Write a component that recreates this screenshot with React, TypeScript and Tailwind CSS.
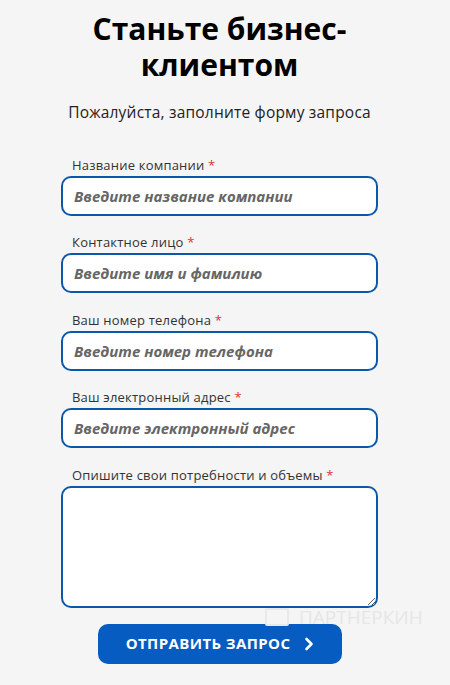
import React from "react";

const fields = [
  { label: "Название компании", ph: "Введите название компании" },
  { label: "Контактное лицо", ph: "Введите имя и фамилию" },
  { label: "Ваш номер телефона", ph: "Введите номер телефона" },
  { label: "Ваш электронный адрес", ph: "Введите электронный адрес" },
];

export default function App() {
  return (
    <div
      className="min-h-[685px] w-[450px] bg-[#f5f5f5] text-[#222]"
      style={{ fontFamily: '"Open Sans", "Noto Sans", sans-serif' }}
    >
      <div className="ml-[61px] flex w-[317px] flex-col pt-[11px]">
        <h1 className="flex flex-col items-center text-[30px] font-bold leading-[36px] text-black">
          <span>Станьте бизнес-</span>
          <span>клиентом</span>
        </h1>
        <p className="mt-[19px] text-center text-[15.5px] leading-[20px] tracking-[0.2px] text-[#222]">
          Пожалуйста, заполните форму запроса
        </p>
        <div className="mt-[33.5px] flex flex-col gap-[17.5px]">
          {fields.map((f) => (
            <div key={f.label} className="flex flex-col">
              <label className="ml-[11px] text-[13px] leading-[18px] tracking-[0.2px] text-[#333]">
                {f.label} <span className="text-[#d33]">*</span>
              </label>
              <input
                className="mt-[2px] h-[40px] w-[317px] rounded-[10px] border-2 border-[#0b58ab] bg-white px-[11px] text-[15px] font-bold italic outline-none placeholder:text-[#666]"
                placeholder={f.ph}
              />
            </div>
          ))}
          <div className="flex flex-col">
            <label className="ml-[11px] text-[13px] leading-[18px] tracking-[0.2px] text-[#333]">
              Опишите свои потребности и объемы <span className="text-[#d33]">*</span>
            </label>
            <textarea className="mt-[2px] h-[122px] w-[317px] rounded-[10px] border-2 border-[#0b58ab] bg-white outline-none" />
          </div>
        </div>
        <div className="relative">
          <div className="pointer-events-none absolute left-[204px] top-[-1px] flex items-center gap-[10px] text-[19px] leading-[20px] text-[#e6e6e6]">
            <span className="h-[18px] w-[24px] rounded-[2px] border-2 border-[#e9e9e9]" />
            ПАРТНЕРКИН
          </div>
        </div>
        <button className="ml-[37px] mt-[16px] flex h-[40px] w-[244px] items-center justify-center gap-[14px] rounded-[10px] bg-[#065cc0] text-[15px] font-bold tracking-[0.4px] text-white">
          ОТПРАВИТЬ ЗАПРОС
          <svg width="10" height="14" viewBox="0 0 10 14" fill="none">
            <path d="M2.5 2 L7.5 7 L2.5 12" stroke="white" strokeWidth="2.6" strokeLinecap="round" strokeLinejoin="round" />
          </svg>
        </button>
      </div>
    </div>
  );
}
